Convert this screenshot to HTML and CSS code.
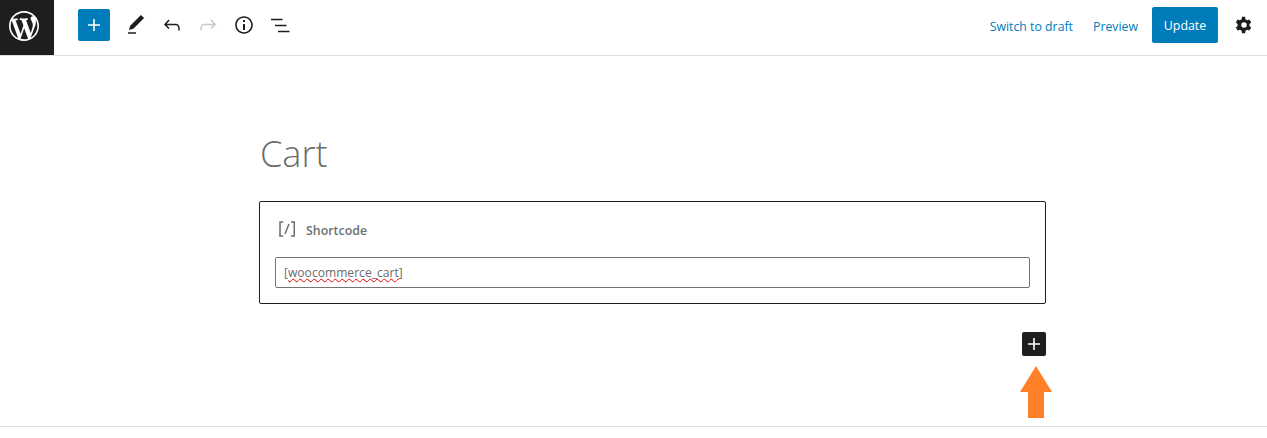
FILE: index.html
```html
<!DOCTYPE html>
<html lang="en">

<head>
    <meta charset="UTF-8">
    <meta name="viewport" content="width=device-width, initial-scale=1.0">
    <title>Edit Page: Cart</title>
    <link rel="stylesheet" href="styles.css">
</head>

<body>
    <div class="header">
        <a class="logo" href="#">
            <svg width="30" height="30" viewBox="0 0 20 20"><path fill="#fff" d="M20 10c0-5.51-4.49-10-10-10C4.48 0 0 4.49 0 10c0 5.52 4.48 10 10 10 5.51 0 10-4.48 10-10zM7.78 15.37L4.37 6.22c.55-.02 1.17-.08 1.17-.08.5-.06.44-1.13-.06-1.11 0 0-1.45.11-2.37.11-.18 0-.37 0-.58-.01C4.12 2.69 6.87 1.11 10 1.11c2.33 0 4.45.87 6.05 2.34-.68-.11-1.65.39-1.65 1.58 0 .74.45 1.36.9 2.1.35.61.55 1.36.55 2.46 0 1.49-1.4 5-1.4 5l-3.03-8.37c.54-.02.82-.17.82-.17.5-.05.44-1.25-.06-1.22 0 0-1.44.12-2.38.12-.87 0-2.33-.12-2.33-.12-.5-.03-.56 1.2-.06 1.22l.92.08 1.26 3.41zM17.41 10c.24-.64.74-1.87.43-4.25.7 1.29 1.05 2.71 1.05 4.25 0 3.29-1.73 6.24-4.4 7.78.97-2.59 1.94-5.2 2.92-7.78zM6.1 18.09C3.12 16.65 1.11 13.53 1.11 10c0-1.3.23-2.48.72-3.59C3.25 10.3 4.67 14.2 6.1 18.09zm4.03-6.63l2.58 6.98c-.86.29-1.76.45-2.71.45-.79 0-1.57-.11-2.29-.33.81-2.38 1.62-4.74 2.42-7.1z"/></svg>
        </a>
        <div class="tools">
            <button class="inserter">
                <svg width="24" height="24" viewBox="0 0 24 24"><path fill="#fff" d="M18 11.2h-5.2V6h-1.6v5.2H6v1.6h5.2V18h1.6v-5.2H18z"/></svg>
            </button>
            <button class="tool">
                <svg width="24" height="24" viewBox="0 0 24 24"><path d="M20.1 5.1L16.9 2 6.2 12.7l-1.3 4.4 4.5-1.3L20.1 5.1zM4 20.8h8v-1.5H4v1.500z"/></svg>
            </button>
            <button class="tool">
                <svg width="24" height="24" viewBox="0 0 24 24"><path d="M18.3 11.7c-.6-.6-1.4-.9-2.3-.9H6.7l2.9-3.3-1.1-1-4.5 5L8.500 16l1-1-2.700-2.700H16c.5 0 .9.2 1.300.5 1 1 1 3.400 1 4.500v.3h1.500v-.2c0-1.500 0-4.300-1.500-5.700z"/></svg>
            </button>
            <button class="tool disabled">
                <svg width="24" height="24" viewBox="0 0 24 24"><path d="M15.600 6.500l-1.100 1 2.900 3.300H8c-.9 0-1.700.3-2.300.9-1.400 1.500-1.400 4.200-1.400 5.600v.2h1.500v-.3c0-1.100 0-3.500 1-4.500.3-.3.7-.5 1.300-.5h9.200L14.500 15l1.100 1.100 4.600-4.600-4.600-5z"/></svg>
            </button>
            <button class="tool">
                <svg width="24" height="24" viewBox="0 0 24 24"><path d="M12 3.200c-4.800 0-8.800 3.900-8.800 8.800 0 4.800 3.900 8.800 8.800 8.800 4.800 0 8.800-3.900 8.800-8.800 0-4.800-4-8.800-8.800-8.800zm0 16c-4 0-7.200-3.300-7.200-7.200C4.800 8 8 4.800 12 4.800s7.200 3.300 7.200 7.200c0 4-3.200 7.200-7.200 7.200zM11 17h2v-6h-2v6zm0-8h2V7h-2v2z"/></svg>
            </button>
            <button class="tool">
                <svg width="24" height="24" viewBox="0 0 24 24"><path d="M3 5.800h11.500v1.500H3zM7 11.800h11.500v1.500H7zM10 17.800h11.500v1.500H10z"/></svg>
            </button>
        </div>
        <div class="actions">
            <a class="link" href="#">Switch to draft</a>
            <a class="link" href="#">Preview</a>
            <button class="update">Update</button>
            <button class="tool settings">
                <svg width="22" height="22" viewBox="0 0 24 24"><path d="M18 12c0-.4 0-.7-.1-1.100l2-1.600-2-3.400-2.400.9c-.6-.5-1.200-.8-1.900-1.100L13.200 3h-3.400l-.4 2.700c-.7.3-1.300.6-1.900 1.100L5.100 5.900l-2 3.400 2 1.600c-.1.400-.1.700-.1 1.100s0 .7.1 1.100l-2 1.600 2 3.400 2.400-.9c.6.5 1.200.8 1.900 1.100l.4 2.700h3.400l.4-2.700c.7-.3 1.300-.6 1.900-1.100l2.400.9 2-3.400-2-1.600c.1-.4.1-.7.1-1.100zm-6 3a3 3 0 110-6 3 3 0 010 6z"/></svg>
            </button>
        </div>
    </div>

    <div class="editor">
        <h1 class="title">Cart</h1>
        <div class="block">
            <div class="block-label">
                <svg width="24" height="24" viewBox="0 0 24 24"><path d="M16 4.200v1.500h2.500v12.500H16v1.500h4V4.200h-4zM4.200 19.800h4v-1.500H5.800V5.800h2.500V4.200h-4l-.1 15.600zm5.100-3.100l1.400.6 4-10-1.400-.6-4 10z"/></svg>
                <span class="block-name">Shortcode</span>
            </div>
            <div class="code-input">[<span class="misspelled">woocommerce_cart</span>]</div>
        </div>
        <div class="appender">
            <button class="add">
                <svg width="24" height="24" viewBox="0 0 24 24"><path fill="#fff" d="M18 11.200h-5.200V6h-1.600v5.200H6v1.600h5.200V18h1.600v-5.200H18z"/></svg>
            </button>
            <svg class="arrow" width="32" height="52" viewBox="0 0 32 52"><path fill="#ff8027" d="M16 0L32 26H24V52H8V26H0z"/></svg>
        </div>
    </div>

    <div class="footer"></div>
</body>

</html>
```

FILE: styles.css
```css
* {
    margin: 0;
    padding: 0;
    box-sizing: border-box;
}

body {
    background: #fff;
    font-family: "Open Sans", "Noto Sans", sans-serif;
    color: #1e1e1e;
    overflow: hidden;
}

button {
    border: 0;
    background: none;
    font-family: inherit;
    cursor: pointer;
}

a {
    text-decoration: none;
}

.header {
    height: 56px;
    display: flex;
    border-bottom: 1px solid #e0e0e0;
}

.logo {
    width: 54px;
    height: 55px;
    padding: 11px 15px 14px 9px;
    background: #1e1e1e;
    flex: none;
}

.logo svg {
    display: block;
}

.tools {
    display: flex;
    align-items: center;
    margin-left: 24px;
    padding-bottom: 5px;
}

.inserter {
    width: 32px;
    height: 32px;
    margin-right: 8px;
    background: #007cba;
    border-radius: 2px;
    display: flex;
    align-items: center;
    justify-content: center;
}

.tool {
    width: 36px;
    height: 36px;
    display: flex;
    align-items: center;
    justify-content: center;
    fill: #1e1e1e;
}

.tool.disabled {
    fill: #c8c8c8;
}

.actions {
    margin-left: auto;
    display: flex;
    align-items: center;
    padding-right: 5px;
    padding-bottom: 5px;
}

.link {
    font-size: 12.3px;
    color: #007cba;
    margin-right: 20px;
    margin-top: 2px;
}

.update {
    width: 66px;
    height: 36px;
    margin-left: -6px;
    background: #007cba;
    color: #fff;
    font-size: 12.4px;
    border-radius: 2px;
}

.settings {
    margin-left: 8px;
}

.editor {
    width: 787px;
    margin-left: 259px;
    height: 370px;
    padding-top: 73px;
}

.title {
    margin-left: 1px;
    font-size: 36px;
    font-weight: 300;
    line-height: 50px;
    color: #6b6b6b;
}

.block {
    margin-top: 22px;
    height: 103px;
    border: 1px solid #1e1e1e;
    border-radius: 2px;
    padding: 15px;
}

.block-label {
    display: flex;
    align-items: center;
    gap: 7px;
    height: 24px;
    font-size: 12.4px;
    font-weight: 600;
    color: #6f6f6f;
    fill: #6f6f6f;
}

.block-name {
    margin-top: 2px;
}

.code-input {
    margin-top: 16px;
    height: 31px;
    border: 1px solid #757575;
    border-radius: 2px;
    padding: 0 8px;
    font-size: 12.1px;
    line-height: 29px;
    color: #6b6b6b;
}

.misspelled {
    text-decoration: underline wavy #e00;
    text-decoration-thickness: 1px;
}

.appender {
    position: relative;
    display: flex;
    justify-content: flex-end;
    margin-top: 28px;
}

.add {
    width: 24px;
    height: 24px;
    background: #1e1e1e;
    border-radius: 2px;
    display: flex;
    align-items: center;
    justify-content: center;
}

.arrow {
    position: absolute;
    top: 34px;
    right: -6px;
}

.footer {
    border-top: 1px solid #e0e0e0;
}
```
